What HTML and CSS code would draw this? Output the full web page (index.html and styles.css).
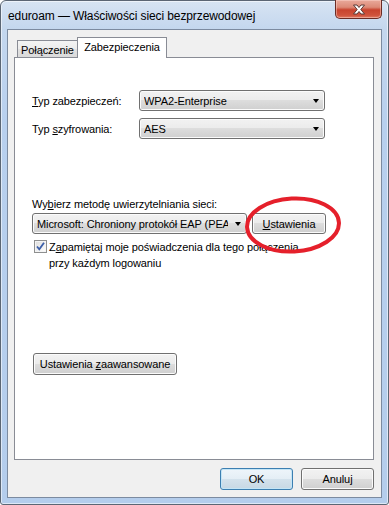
FILE: index.html
```html
<!DOCTYPE html>
<html lang="pl">
<head>
<meta charset="utf-8">
<title>eduroam — Właściwości sieci bezprzewodowej</title>
<link rel="stylesheet" href="styles.css">
</head>
<body>
<div class="window">
  <div class="titlebar">
    <span class="title">eduroam — Właściwości sieci bezprzewodowej</span>
    <div class="close">
      <svg width="14" height="11" viewBox="0 0 14 11"><path d="M1.5 1 H5 L7 3.5 L9 1 H12.5 L8.8 5.5 L12.5 10 H9 L7 7.5 L5 10 H1.5 L5.2 5.5 Z" fill="#fff" stroke="#5a3a36" stroke-width="1" stroke-linejoin="round"/></svg>
    </div>
  </div>
  <div class="client">
    <div class="tabs">
      <div class="tab tab-inactive">Połączenie</div>
      <div class="tab tab-active">Zabezpieczenia</div>
    </div>
    <div class="panel">
      <div class="field-row">
        <span class="field-label"><u>T</u>yp zabezpieczeń:</span>
        <div class="combo combo-wide"><span class="combo-text">WPA2-Enterprise</span><span class="arrow"></span></div>
      </div>
      <div class="field-row field-row-second">
        <span class="field-label">Typ <u>s</u>zyfrowania:</span>
        <div class="combo combo-wide"><span class="combo-text">AES</span><span class="arrow"></span></div>
      </div>
      <div class="method-label">Wy<u>b</u>ierz metodę uwierzytelniania sieci:</div>
      <div class="method-row">
        <div class="combo combo-method"><span class="combo-text">Microsoft: Chroniony protokół EAP (PEAP)</span><span class="arrow"></span></div>
        <button class="btn btn-settings"><u>U</u>stawienia</button>
      </div>
      <div class="check-row">
        <span class="checkbox"><svg width="11" height="11" viewBox="0 0 11 11"><path d="M2 5.5 L4.3 8.3 L9 1.8" fill="none" stroke="#3b5ea8" stroke-width="1.8"/></svg></span>
        <span class="check-text">Z<u>a</u>pamiętaj moje poświadczenia dla tego połączenia<br>przy każdym logowaniu</span>
      </div>
      <button class="btn btn-advanced">Ustawienia <u>z</u>aawansowane</button>
    </div>
    <div class="footer">
      <button class="btn btn-dialog btn-default">OK</button>
      <button class="btn btn-dialog">Anuluj</button>
    </div>
  </div>
  <svg class="annotation" width="100" height="62" viewBox="0 0 100 62">
    <ellipse cx="49" cy="29" rx="46" ry="26.5" transform="rotate(-3 49 29)" fill="none" stroke="#e5202b" stroke-width="4"/>
  </svg>
</div>
</body>
</html>
```
FILE: styles.css
```css
* { box-sizing: border-box; }
html, body { margin: 0; padding: 0; background: #ffffff; }
body {
  font-family: "Liberation Sans", Arial, sans-serif;
  font-size: 11px;
  letter-spacing: -0.1px;
  color: #000;
}
u { text-decoration: underline; text-underline-offset: 1px; }

.window {
  position: relative;
  width: 389px;
  height: 505px;
  border: 1px solid #5b6674;
  border-radius: 6px 6px 3px 3px;
  background: linear-gradient(to bottom, #d7e4f3 0px, #c4d7ee 28px, #b8d0ee 120px, #b4cdec 100%);
  box-shadow: inset 0 0 0 1px rgba(255,255,255,0.55);
  padding: 0 6px 6px 6px;
  display: flex;
  flex-direction: column;
}

.titlebar {
  height: 28px;
  display: flex;
  justify-content: space-between;
  align-items: flex-start;
}
.title {
  font-size: 12px;
  line-height: 16px;
  margin-top: 7px;
  margin-left: 1px;
  white-space: nowrap;
  color: #000;
}
.close {
  width: 47px;
  height: 19px;
  margin-top: -1px;
  border: 1px solid #6b2c25;
  border-top: none;
  border-radius: 0 0 5px 5px;
  background: linear-gradient(to bottom, #e9a99b 0%, #dc8a77 40%, #c8432e 55%, #d0533c 85%, #e07a63 100%);
  box-shadow: inset 0 0 0 1px rgba(255,220,210,0.45);
  display: flex;
  align-items: center;
  justify-content: center;
}

.client {
  flex: 1;
  background: #f0f0f0;
  border: 1px solid #7c8ba0;
  padding: 7px 7px 7px 6px;
  display: flex;
  flex-direction: column;
}

.tabs {
  display: flex;
  align-items: flex-end;
  padding-left: 3px;
  height: 20px;
}
.tab {
  border: 1px solid #898c95;
  border-bottom: none;
  display: flex;
  align-items: center;
  justify-content: center;
  white-space: nowrap;
}
.tab-inactive {
  width: 61px;
  height: 17px;
  background: linear-gradient(to bottom, #f4f4f4 0%, #ececec 50%, #e2e2e2 50%, #dadada 100%);
  padding-top: 2px;
}
.tab-active {
  width: 90px;
  height: 21px;
  margin-left: -1px;
  margin-bottom: -1px;
  background: #fff;
  position: relative;
  z-index: 1;
  padding-bottom: 3px;
}

.panel {
  height: 403px;
  background: #fff;
  border: 1px solid #898c95;
  padding: 32px 0 0 17px;
  display: flex;
  flex-direction: column;
  align-items: flex-start;
}

.field-row {
  display: flex;
  align-items: center;
  height: 21px;
}
.field-row-second { margin-top: 7px; }
.field-label { width: 107px; white-space: nowrap; }

.combo {
  height: 21px;
  border: 1px solid #707070;
  border-radius: 3px;
  background: linear-gradient(to bottom, #f2f2f2 0%, #ebebeb 50%, #dddddd 50%, #cfcfcf 100%);
  box-shadow: inset 0 0 0 1px #fbfbfb;
  display: flex;
  align-items: center;
  padding-left: 4px;
}
.combo-wide { width: 186px; }
.combo-text {
  flex: 1;
  white-space: nowrap;
  overflow: hidden;
}
.arrow {
  width: 0;
  height: 0;
  border-left: 3.5px solid transparent;
  border-right: 3.5px solid transparent;
  border-top: 4px solid #000;
  margin: 1px 5px 0 8px;
}
.combo-method { width: 215px; }
.combo-method .arrow { margin-left: 7px; margin-right: 5px; }

.method-label {
  margin-top: 58px;
  line-height: 15px;
  height: 15px;
  white-space: nowrap;
}
.method-row {
  margin-top: 1px;
  display: flex;
  align-items: center;
  gap: 5px;
}

.btn {
  font-family: inherit;
  font-size: 11px;
  letter-spacing: -0.1px;
  color: #000;
  height: 22px;
  border: 1px solid #707070;
  border-radius: 3px;
  background: linear-gradient(to bottom, #f2f2f2 0%, #ebebeb 50%, #dddddd 50%, #cfcfcf 100%);
  box-shadow: inset 0 0 0 1px #fbfbfb;
  padding: 0;
  margin: 0;
  line-height: 18px;
  white-space: nowrap;
}
.btn-settings { width: 74px; height: 21px; }

.check-row {
  margin-top: 5px;
  margin-left: 2px;
  display: flex;
  align-items: flex-start;
}
.checkbox {
  width: 13px;
  height: 13px;
  margin-top: 1px;
  border: 1px solid #8e8f8f;
  background: linear-gradient(135deg, #dcdcdc 0%, #f4f4f4 70%, #ffffff 100%);
  box-shadow: inset 0 0 0 1px #f4f4f4;
  display: flex;
  align-items: center;
  justify-content: center;
}
.check-text {
  margin-left: 2px;
  line-height: 16px;
  white-space: nowrap;
}

.btn-advanced {
  margin-top: 82px;
  margin-left: 1px;
  width: 144px;
}

.footer {
  margin-top: 8px;
  display: flex;
  justify-content: flex-end;
  gap: 8px;
}
.btn-dialog { width: 73px; }
.btn-default {
  border-color: #3c7fb1;
  box-shadow: inset 0 0 0 1px #c4e5f6;
  background: linear-gradient(to bottom, #eef5fa 0%, #e4eef5 50%, #d4e2ec 50%, #c7d8e4 100%);
}

.annotation {
  position: absolute;
  left: 243px;
  top: 195px;
}
```
